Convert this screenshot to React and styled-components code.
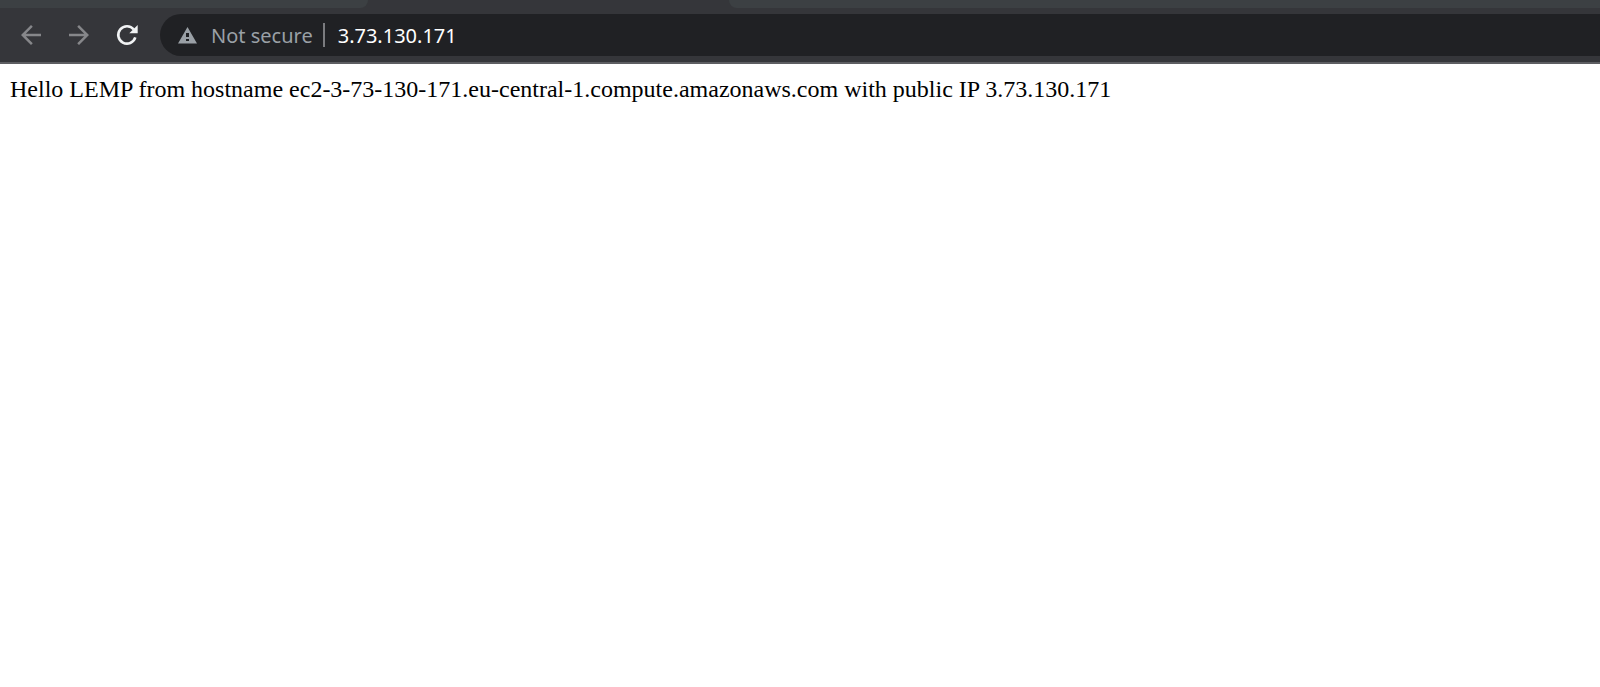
import React from "react";
import styled, { createGlobalStyle } from "styled-components";

const GlobalStyle = createGlobalStyle`
  * { box-sizing: border-box; }
  body { margin: 0; background: #fff; overflow-x: hidden; }
`;

const TabStrip = styled.div`
  display: grid;
  grid-template-columns: 368px 361px 1fr;
  height: 8px;
  background: #35363a;
`;

const TabEdge = styled.div`
  background: #3c4043;
  border-radius: ${(p) => (p.$side === "left" ? "0 0 10px 0" : "0 0 0 10px")};
`;

const Toolbar = styled.header`
  display: flex;
  align-items: center;
  gap: 18px;
  padding: 6px 0 6px 16px;
  background: #35363a;
  border-bottom: 2px solid #5d5e62;
`;

const IconButton = styled.button`
  display: flex;
  flex: none;
  padding: 0;
  border: 0;
  background: none;
  color: ${(p) => (p.$dim ? "#86878a" : "#f1f3f4")};
  svg {
    width: 30px;
    height: 30px;
    fill: currentColor;
  }
`;

const Omnibox = styled.form`
  display: flex;
  flex: 1;
  align-items: center;
  height: 42px;
  padding-left: 18px;
  border-radius: 21px 0 0 21px;
  background: #202124;
  font: 20px/28px "Noto Sans", sans-serif;
`;

const SecurityButton = styled.button`
  display: flex;
  flex: none;
  align-items: center;
  gap: 14px;
  padding: 2px 0 0;
  border: 0;
  background: none;
  color: #9aa0a6;
  font: inherit;
  svg {
    width: 19px;
    height: 18px;
    fill: currentColor;
  }
`;

const Separator = styled.span`
  width: 2px;
  height: 24px;
  margin: 0 13px 0 10px;
  background: #7b7c7f;
`;

const Address = styled.input`
  flex: 1;
  min-width: 0;
  padding: 2px 0 0;
  border: 0;
  outline: 0;
  background: none;
  color: #fff;
  font: inherit;
`;

const Page = styled.main`
  padding: 11px 10px;
  color: #000;
  font: 24px/28px "Liberation Serif", serif;
`;

export default function App() {
  return (
    <>
      <GlobalStyle />
      <TabStrip>
        <TabEdge $side="left" />
        <span />
        <TabEdge $side="right" />
      </TabStrip>
      <Toolbar>
        <IconButton type="button" aria-label="Back" $dim>
          <svg viewBox="0 0 24 24">
            <path d="M20 11H7.83l5.59-5.59L12 4l-8 8 8 8 1.41-1.41L7.83 13H20v-2z" />
          </svg>
        </IconButton>
        <IconButton type="button" aria-label="Forward" $dim>
          <svg viewBox="0 0 24 24">
            <path d="M12 4l-1.41 1.41L16.17 11H4v2h12.17l-5.58 5.59L12 20l8-8z" />
          </svg>
        </IconButton>
        <IconButton type="button" aria-label="Reload">
          <svg viewBox="0 0 30 30">
            <path
              d="M23.3 17.4A8.7 8.7 0 1 1 21.8 9.5"
              fill="none"
              stroke="currentColor"
              strokeWidth="2.6"
            />
            <path d="M17.3 13.3L25.7 5v8.3z" />
          </svg>
        </IconButton>
        <Omnibox onSubmit={(e) => e.preventDefault()}>
          <SecurityButton type="button">
            <svg viewBox="0 0 19 18" aria-hidden="true">
              <path fillRule="evenodd" d="M9.5 0L19 16.5H0zM8 6v4h3V6zM8 12v2h3v-2z" />
            </svg>
            Not secure
          </SecurityButton>
          <Separator />
          <Address aria-label="Address" defaultValue="3.73.130.171" spellCheck={false} />
        </Omnibox>
      </Toolbar>
      <Page>
        Hello LEMP from hostname ec2-3-73-130-171.eu-central-1.compute.amazonaws.com with public IP 3.73.130.171
      </Page>
    </>
  );
}
